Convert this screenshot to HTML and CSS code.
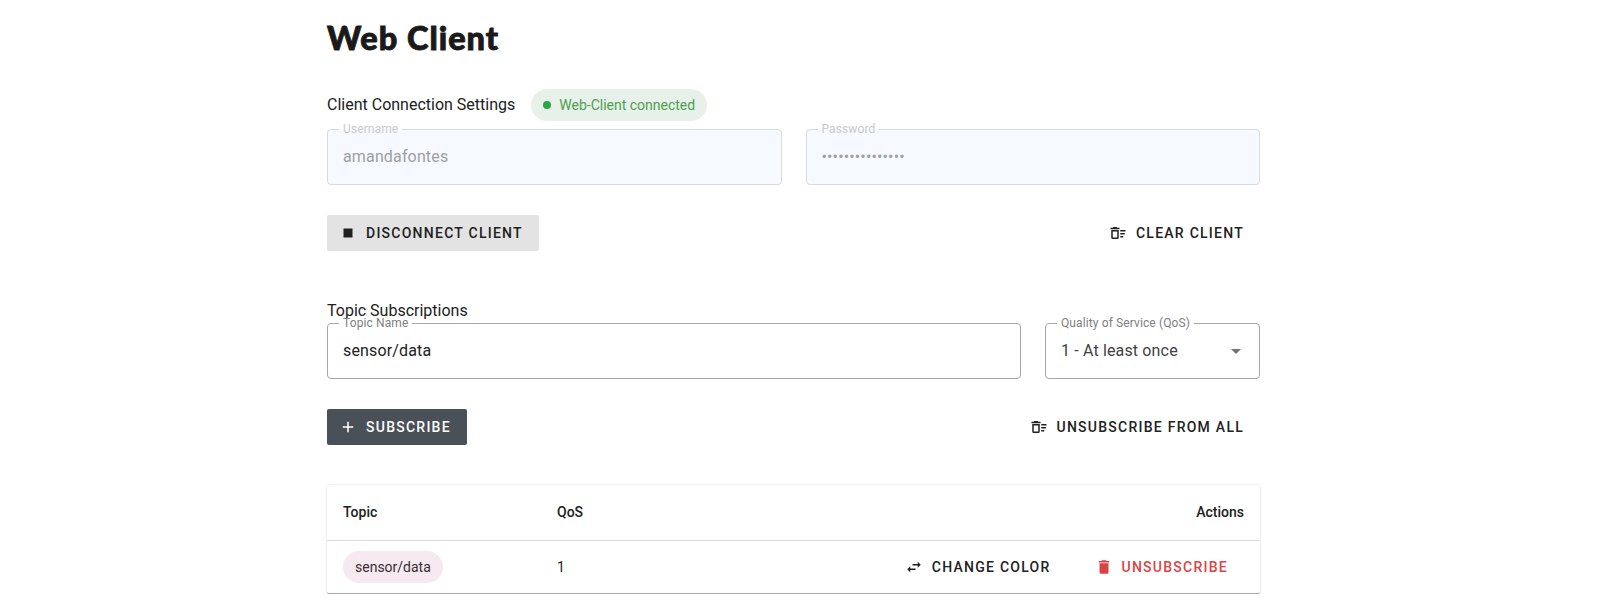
FILE: index.html
```html
<!DOCTYPE html>
<html lang="en">
<head>
<meta charset="utf-8">
<title>Web Client</title>
<link rel="stylesheet" href="styles.css">
</head>
<body>
<svg class="sprite" aria-hidden="true">
  <symbol id="stop" viewBox="0 0 24 24"><path d="M18,18H6V6H18V18Z"/></symbol>
  <symbol id="sweep" viewBox="0 0 24 24"><path d="M15,16H19V18H15V16M15,8H22V10H15V8M15,12H21V14H15V12M11,10V18H5V10H11M13,8H3V18A2,2 0 0,0 5,20H11A2,2 0 0,0 13,18V8M14,5H11L10,4H6L5,5H2V7H14V5Z"/></symbol>
  <symbol id="plus" viewBox="0 0 24 24"><path d="M19,13H13V19H11V13H5V11H11V5H13V11H19V13Z"/></symbol>
  <symbol id="swap" viewBox="0 0 24 24"><path d="M21,9L17,5V8H10V10H17V13M7,11L3,15L7,19V16H14V14H7V11Z"/></symbol>
  <symbol id="trash" viewBox="0 0 24 24"><path d="M19,4H15.5L14.5,3H9.5L8.5,4H5V6H19M6,19A2,2 0 0,0 8,21H16A2,2 0 0,0 18,19V7H6V19Z"/></symbol>
  <symbol id="down" viewBox="0 0 24 24"><path d="M7,10L12,15L17,10H7Z"/></symbol>
</svg>
<main class="page">
  <h1 class="title">Web Client</h1>
  <section>
    <div class="heading">
      <h2 class="subtitle">Client Connection Settings</h2>
      <span class="chip chip-status"><i class="dot"></i>Web-Client connected</span>
    </div>
    <div class="fields fields-even">
      <fieldset class="field field-disabled"><legend class="label">Username</legend><div class="value">amandafontes</div></fieldset>
      <fieldset class="field field-disabled"><legend class="label">Password</legend><div class="value"><span class="secret">•••••••••••••••</span></div></fieldset>
    </div>
    <div class="buttons">
      <button class="btn btn-grey"><svg class="icon"><use href="#stop"/></svg>Disconnect Client</button>
      <button class="btn"><svg class="icon"><use href="#sweep"/></svg>Clear Client</button>
    </div>
  </section>
  <section class="topics">
    <h2 class="subtitle">Topic Subscriptions</h2>
    <div class="fields fields-topic">
      <fieldset class="field"><legend class="label">Topic Name</legend><div class="value">sensor/data</div></fieldset>
      <fieldset class="field"><legend class="label">Quality of Service (QoS)</legend><div class="value value-select">1 - At least once<svg class="arrow"><use href="#down"/></svg></div></fieldset>
    </div>
    <div class="buttons">
      <button class="btn btn-dark"><svg class="icon"><use href="#plus"/></svg>Subscribe</button>
      <button class="btn"><svg class="icon"><use href="#sweep"/></svg>Unsubscribe from all</button>
    </div>
  </section>
  <div class="table">
    <div class="row row-head"><span>Topic</span><span>QoS</span><span class="end">Actions</span></div>
    <div class="row">
      <span><span class="chip chip-topic">sensor/data</span></span>
      <span>1</span>
      <span class="actions">
        <button class="btn"><svg class="icon"><use href="#swap"/></svg>Change color</button>
        <button class="btn btn-red"><svg class="icon"><use href="#trash"/></svg>Unsubscribe</button>
      </span>
    </div>
  </div>
</main>
</body>
</html>
```
FILE: styles.css
```css
* { box-sizing: border-box; }
body { margin: 0; background: #fff; color: #212121; font: 16px/24px Roboto, sans-serif; }
.sprite { position: absolute; width: 0; height: 0; }
.page { width: 933px; margin-left: 327px; padding-top: 14px; }
.title { margin: 0; height: 48px; font: 900 32.5px/48px Lato, sans-serif; color: #1a1a1a; letter-spacing: 1px; -webkit-text-stroke: 0.9px #1a1a1a; }
.heading { display: flex; align-items: center; gap: 16px; height: 32px; margin-top: 27px; }
.subtitle { margin: 0; font-size: 16px; font-weight: 400; line-height: 24px; }
.chip { display: inline-flex; align-items: center; height: 32px; padding: 0 12px; border-radius: 16px; font-size: 14px; line-height: 20px; }
.chip-status { gap: 8px; background: #e8f1e9; color: #4c9f51; }
.chip-topic { background: #f6e9ef; color: #3a2b32; }
.dot { width: 8px; height: 8px; border-radius: 50%; background: #28a745; }
.fields { display: grid; column-gap: 24px; }
.fields-even { grid-template-columns: 1fr 1fr; margin-top: 2px; }
.fields-topic { grid-template-columns: 1fr 215px; margin-top: -6px; }
.field { min-width: 0; height: 62px; margin: 0; padding: 0 15px 0 11px; border: 1px solid #a6a6a6; border-radius: 4px; }
.field-disabled { border-color: #d8dbe0; background: #f6f9ff; }
.label { padding: 0 4px; font-size: 12px; line-height: 13px; letter-spacing: 0.11px; color: #808080; }
.value { display: flex; align-items: center; height: 42px; padding-left: 4px; letter-spacing: 0.15px; }
.field-disabled .label { color: #c9c9cb; }
.field-disabled .value { color: #9f9fa2; }
.secret { font-size: 16px; letter-spacing: 0.15px; }
.value-select { justify-content: space-between; color: #424242; }
.arrow { width: 24px; height: 24px; margin-right: -4px; fill: #757575; }
.buttons { display: flex; justify-content: space-between; margin-top: 30px; }
.btn { display: inline-flex; align-items: center; height: 36px; padding: 0 16px; border: 0; border-radius: 2px; background: transparent; color: #212121; font: 500 14px/20px Roboto, sans-serif; letter-spacing: 1.25px; text-transform: uppercase; white-space: nowrap; }
.icon { flex: none; width: 18px; height: 18px; margin: 0 9px 0 -4px; fill: currentColor; }
.btn-grey { background: #e3e3e3; }
.btn-dark { background: #495057; color: #fff; }
.btn-red { color: #dc4444; }
.topics { margin-top: 48px; }
.table { height: 109px; margin-top: 40px; border-bottom: 1px solid #a8a8a8; font-size: 14px; border-radius: 2px; box-shadow: 0 1px 1px rgba(0,0,0,.12), 0 0 3px rgba(0,0,0,.14); }
.row { display: grid; grid-template-columns: 214px 214px 1fr; align-items: center; height: 52px; padding: 0 16px; }
.row-head { height: 56px; padding-bottom: 1px; border-bottom: 1px solid #dedede; font-weight: 500; }
.end { text-align: right; }
.actions { display: flex; justify-content: flex-end; gap: 16px; }
```
